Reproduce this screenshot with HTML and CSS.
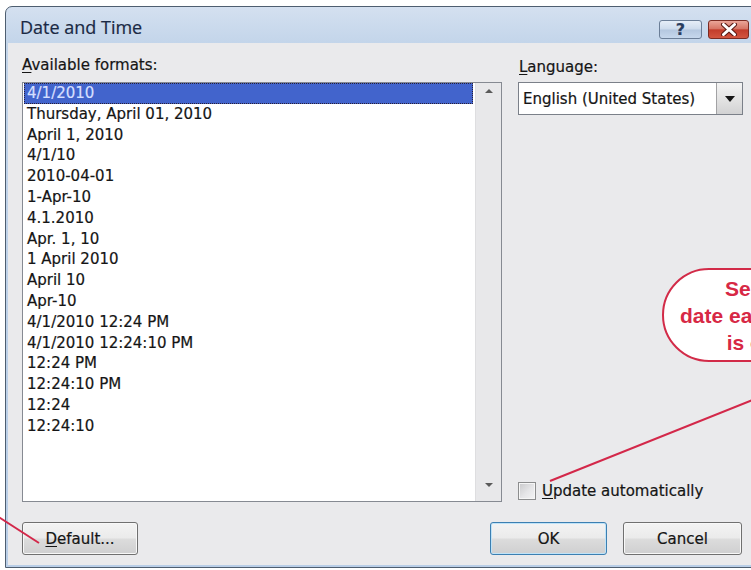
FILE: index.html
```html
<!DOCTYPE html>
<html lang="en">
<head>
<meta charset="utf-8">
<title>Date and Time</title>
<link rel="stylesheet" href="styles.css">
</head>
<body>
<div class="window">
  <div class="titlebar">
    <span class="title">Date and Time</span>
    <div class="caps">
      <span class="cap cap-help">?</span>
      <span class="cap cap-close">
        <svg width="18" height="13" viewBox="0 0 18 13" aria-hidden="true">
          <path d="M3.5 1.5 L14.5 11.5 M14.5 1.5 L3.5 11.5" stroke="#5a1a14" stroke-width="5" stroke-linecap="round"/>
          <path d="M3.5 1.5 L14.5 11.5 M14.5 1.5 L3.5 11.5" stroke="#ffffff" stroke-width="3" stroke-linecap="round"/>
        </svg>
      </span>
    </div>
  </div>

  <div class="client">
    <div class="grid">
      <div class="label"><u>A</u>vailable formats:</div>
      <div class="label label-right"><u>L</u>anguage:</div>

      <div class="listbox">
        <ul class="items">
          <li class="selected">4/1/2010</li>
          <li>Thursday, April 01, 2010</li>
          <li>April 1, 2010</li>
          <li>4/1/10</li>
          <li>2010-04-01</li>
          <li>1-Apr-10</li>
          <li>4.1.2010</li>
          <li>Apr. 1, 10</li>
          <li>1 April 2010</li>
          <li>April 10</li>
          <li>Apr-10</li>
          <li>4/1/2010 12:24 PM</li>
          <li>4/1/2010 12:24:10 PM</li>
          <li>12:24 PM</li>
          <li>12:24:10 PM</li>
          <li>12:24</li>
          <li>12:24:10</li>
        </ul>
        <div class="scrollbar">
          <span class="arrow arrow-up"></span>
          <span class="arrow arrow-down"></span>
        </div>
      </div>

      <div class="right-panel">
        <div class="combo">
          <span class="combo-text">English (United States)</span>
          <span class="combo-btn"><span class="arrow-down-dark"></span></span>
        </div>
        <div class="check">
          <span class="box"></span>
          <span><u>U</u>pdate automatically</span>
        </div>
      </div>
    </div>

    <div class="buttons">
      <span class="btn btn-default"><u>D</u>efault...</span>
      <div class="btn-group">
        <span class="btn btn-ok">OK</span>
        <span class="btn btn-cancel">Cancel</span>
      </div>
    </div>
  </div>
</div>

<div class="callout">
  <span class="callout-line">Select to update</span>
  <span class="callout-line">date each time document</span>
  <span class="callout-line">is opened again</span>
</div>

<svg class="leaders" width="751" height="570" viewBox="0 0 751 570" aria-hidden="true">
  <line x1="550" y1="481" x2="800" y2="381" stroke="#d3284a" stroke-width="2"/>
  <line x1="-6" y1="514" x2="39" y2="543" stroke="#d3284a" stroke-width="2"/>
</svg>
</body>
</html>
```

FILE: styles.css
```css
html,
body {
  margin: 0;
  height: 100%;
  overflow: hidden;
  background: #ffffff;
}

body {
  position: relative;
  font-family: "DejaVu Sans", "Liberation Sans", sans-serif;
  font-size: 15px;
  color: #151515;
}

u {
  text-decoration: underline;
  text-underline-offset: 2px;
}

/* dialog frame */
.window {
  box-sizing: border-box;
  width: 760px;
  margin: 6px 0 0 5px;
  border: 1px solid #4e5e70;
  border-radius: 7px 7px 0 0;
  padding: 0 2px 2px;
  background: linear-gradient(180deg, #d4e0f0 0, #c3d5ea 36px, #b9cee7 100%);
  -webkit-text-stroke: 0.2px currentColor;
}

.titlebar {
  height: 36px;
  display: flex;
  align-items: flex-start;
}

.title {
  margin: 8px 0 0 12px;
  font-family: "Open Sans", "DejaVu Sans", sans-serif;
  font-size: 18px;
  line-height: 24px;
  color: #1a2944;
}

.caps {
  margin: 13px 13px 0 auto;
  display: flex;
  gap: 6px;
}

.cap {
  box-sizing: border-box;
  height: 19px;
  border-radius: 3px;
  display: flex;
  align-items: center;
  justify-content: center;
}

.cap-help {
  width: 43px;
  border: 1px solid #6b7e97;
  background: linear-gradient(180deg, #e6eef8 0%, #cddbec 48%, #b4c7df 52%, #c6d7ec 100%);
  font-family: "DejaVu Sans", sans-serif;
  font-weight: bold;
  font-size: 16px;
  line-height: 17px;
  color: #2a3d5e;
}

.cap-close {
  width: 41px;
  border: 1px solid #7b2b22;
  background: linear-gradient(180deg, #eaa699 0%, #d67565 46%, #c23c2b 52%, #d2553f 100%);
}

/* client area */
.client {
  background: #eaeaec;
  padding: 13px 20px 10px 14px;
}

.grid {
  display: grid;
  grid-template-columns: 480px 225px;
  grid-template-rows: 18px 420px;
  column-gap: 16px;
  row-gap: 8px;
}

.label {
  line-height: 18px;
  white-space: nowrap;
}

.label-right {
  padding-left: 1px;
  transform: translateY(2px);
}

/* formats list */
.listbox {
  box-sizing: border-box;
  display: flex;
  height: 420px;
  border: 1px solid #868a92;
  background: #ffffff;
}

.items {
  flex: 1;
  list-style: none;
  margin: 0;
  padding: 0 2px 0 1px;
}

.items li {
  height: 20.8px;
  line-height: 20.8px;
  padding-left: 3px;
  white-space: nowrap;
}

.items li.selected {
  background: #4264cc;
  color: #d6dfff;
  outline: 1px dotted #2a2036;
  outline-offset: -1px;
}

.scrollbar {
  box-sizing: border-box;
  width: 26px;
  background: #e8e8ea;
  border-left: 1px solid #dedee0;
  display: flex;
  flex-direction: column;
  justify-content: space-between;
  align-items: center;
  padding: 6px 0 14px;
}

.arrow {
  width: 0;
  height: 0;
  border-left: 4px solid transparent;
  border-right: 4px solid transparent;
}

.arrow-up {
  border-bottom: 4px solid #5a5a5a;
}

.arrow-down {
  border-top: 4px solid #5a5a5a;
}

/* language side */
.right-panel {
  display: flex;
  flex-direction: column;
  justify-content: space-between;
  padding-bottom: 2px;
}

.combo {
  box-sizing: border-box;
  height: 33px;
  display: flex;
  align-items: center;
  border: 1px solid #7b8089;
  background: #ffffff;
}

.combo-text {
  padding-left: 4px;
  white-space: nowrap;
}

.combo-btn {
  margin-left: auto;
  align-self: stretch;
  width: 25px;
  display: flex;
  align-items: center;
  justify-content: center;
  border-left: 1px solid #a2a2a4;
  background: linear-gradient(180deg, #f4f4f4 0%, #e4e4e4 50%, #d2d2d3 100%);
}

.arrow-down-dark {
  width: 0;
  height: 0;
  border-left: 5px solid transparent;
  border-right: 5px solid transparent;
  border-top: 6px solid #161616;
}

.check {
  display: flex;
  align-items: center;
  gap: 6px;
  line-height: 18px;
  white-space: nowrap;
}

.box {
  box-sizing: border-box;
  width: 18px;
  height: 18px;
  border: 1px solid #8c8d8e;
  background: linear-gradient(135deg, #c9c9cb 0%, #e6e6e8 55%, #f4f4f5 100%);
  box-shadow: inset 0 0 0 1px #f6f6f6;
}

/* push buttons */
.buttons {
  display: flex;
  justify-content: space-between;
  margin-top: 20px;
}

.btn-group {
  display: flex;
  gap: 16px;
}

.btn {
  box-sizing: border-box;
  height: 33px;
  display: flex;
  align-items: center;
  justify-content: center;
  border: 1px solid #707070;
  border-radius: 3px;
  background: linear-gradient(180deg, #f3f3f3 0%, #ebebeb 48%, #dcdcdc 52%, #cfcfd0 100%);
  box-shadow: inset 0 0 0 1px #f8f8f8;
  white-space: nowrap;
}

.btn-default {
  width: 116px;
}

.btn-ok {
  width: 117px;
  border-color: #3c7fb1;
  box-shadow: inset 0 0 0 1px #bfe3f8;
}

.btn-cancel {
  width: 119px;
}

/* annotation bubble and leader lines */
.callout {
  position: absolute;
  left: 662px;
  top: 268px;
  box-sizing: border-box;
  width: 288px;
  height: 94px;
  padding-top: 5px;
  border: 2px solid #d22b48;
  border-radius: 47px;
  background: #ffffff;
  font-family: "Liberation Sans", Arial, sans-serif;
  font-weight: bold;
  font-size: 21px;
  line-height: 27px;
  color: #d72845;
  text-align: center;
}

.callout-line {
  display: block;
  white-space: nowrap;
}

.leaders {
  position: absolute;
  left: 0;
  top: 0;
  pointer-events: none;
}
```
